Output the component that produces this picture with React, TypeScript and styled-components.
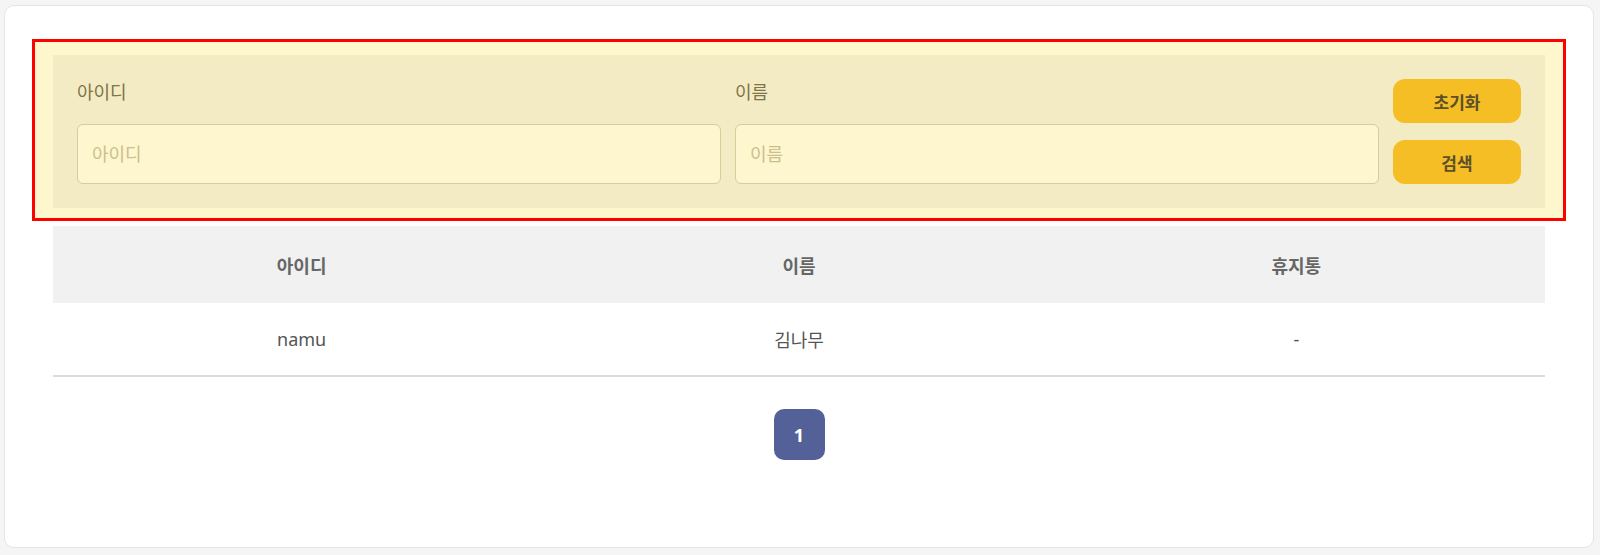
import { createGlobalStyle, styled } from 'styled-components';

const GlobalStyle = createGlobalStyle`
  * { box-sizing: border-box; }
  body {
    margin: 0;
    padding: 5px 6px 7px 4px;
    background-color: #f5f5f5;
    font-family: "Noto Sans", "Noto Sans CJK KR", sans-serif;
  }
`;

const Card = styled.div`
  height: 543px;
  background-color: #ffffff;
  border: 1px solid #e4e4e4;
  border-radius: 10px;
  padding: 33px 48px 0;
`;

const Highlight = styled.div`
  margin: 0 -21px;
  border: 3px solid #ff0000;
  background-color: #fef6cd;
  padding: 13px 18px 10px;
`;

const SearchPanel = styled.form`
  display: grid;
  grid-template-columns: 1fr 1fr 128px;
  column-gap: 14px;
  padding: 24px;
  background-color: #f3ebc3;
`;

const Field = styled.label`
  display: flex;
  flex-direction: column;
`;

const Label = styled.span`
  font-size: 18px;
  line-height: 27px;
  margin-bottom: 18px;
  color: #807349;
`;

const Input = styled.input`
  height: 60px;
  width: 100%;
  padding: 0 14px;
  font-family: inherit;
  font-size: 18px;
  color: #555;
  background-color: #fdf6cf;
  border: 1px solid #d6cc9c;
  border-radius: 6px;
  outline: none;

  &::placeholder {
    color: #cbbf8c;
  }
`;

const Buttons = styled.div`
  display: flex;
  flex-direction: column;
  gap: 17px;
`;

const Button = styled.button`
  height: 44px;
  border: none;
  border-radius: 12px;
  background-color: #f5be25;
  color: #5c4f2a;
  font-family: inherit;
  font-size: 17px;
  font-weight: 700;
  cursor: pointer;
`;

const Table = styled.table`
  width: 100%;
  margin-top: 5px;
  border-collapse: collapse;
  table-layout: fixed;
`;

const Th = styled.th`
  height: 77px;
  background-color: #f1f1f1;
  color: #666;
  font-size: 18px;
  font-weight: 700;
`;

const Td = styled.td`
  height: 73px;
  text-align: center;
  color: #555;
  font-size: 18px;
  border-bottom: 2px solid #dcdcdc;
`;

const Pagination = styled.div`
  display: flex;
  justify-content: center;
  margin-top: 32px;
`;

const PageButton = styled.button<{ active?: boolean }>`
  width: 51px;
  height: 51px;
  border: none;
  border-radius: 10px;
  background-color: ${(props) => (props.active ? '#536198' : '#ffffff')};
  color: ${(props) => (props.active ? '#ffffff' : '#536198')};
  font-family: inherit;
  font-size: 18px;
  font-weight: 700;
`;

const users = [{ id: 'namu', name: '김나무', trash: '-' }];

function App() {
  return (
    <>
      <GlobalStyle />
      <Card>
        <Highlight>
          <SearchPanel onSubmit={(e) => e.preventDefault()}>
            <Field>
              <Label>아이디</Label>
              <Input placeholder="아이디" />
            </Field>
            <Field>
              <Label>이름</Label>
              <Input placeholder="이름" />
            </Field>
            <Buttons>
              <Button type="reset">초기화</Button>
              <Button type="submit">검색</Button>
            </Buttons>
          </SearchPanel>
        </Highlight>
        <Table>
          <thead>
            <tr>
              <Th>아이디</Th>
              <Th>이름</Th>
              <Th>휴지통</Th>
            </tr>
          </thead>
          <tbody>
            {users.map((user) => (
              <tr key={user.id}>
                <Td>{user.id}</Td>
                <Td>{user.name}</Td>
                <Td>{user.trash}</Td>
              </tr>
            ))}
          </tbody>
        </Table>
        <Pagination>
          <PageButton active>1</PageButton>
        </Pagination>
      </Card>
    </>
  );
}

export default App;
